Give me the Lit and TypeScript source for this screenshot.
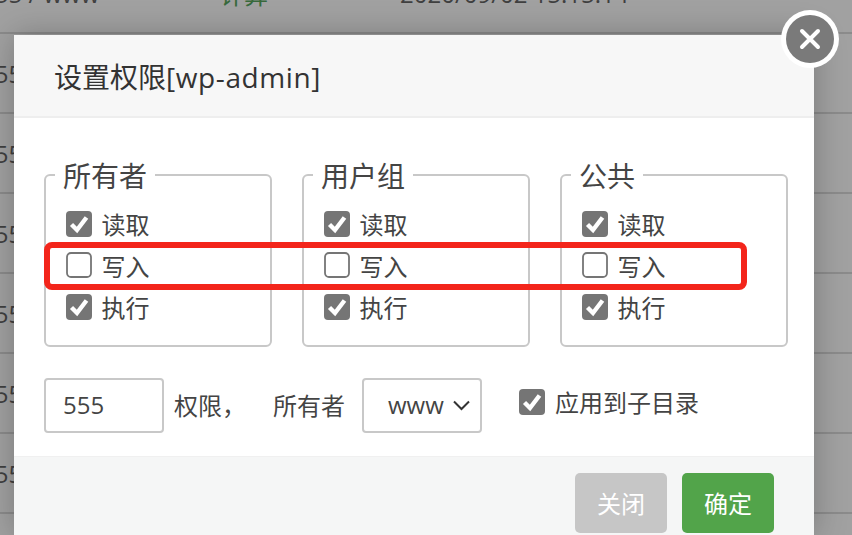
import { LitElement, html, css, svg } from "lit";
import { customElement } from "lit/decorators.js";

const box = (checked: boolean) => html`<svg class="cb" viewBox="0 0 26 26" width="26" height="26">
  ${checked
    ? svg`<rect width="26" height="26" rx="4" fill="#757575"/><path d="M5.5 13.5 L11 19 L20.5 6.5" fill="none" stroke="#fff" stroke-width="4.4"/>`
    : svg`<rect x="1" y="1" width="24" height="24" rx="4" fill="#fff" stroke="#757575" stroke-width="1.8"/>`}
</svg>`;

@customElement("app-root")
export class AppRoot extends LitElement {
  static styles = css`
    :host { display: block; width: 852px; height: 535px; font-family: "Open Sans", "Noto Sans CJK SC", sans-serif; }
    * { box-sizing: border-box; }
    .page { position: relative; width: 852px; height: 535px; overflow: hidden; background: #fff; }
    .table { margin-top: -46px; }
    .tr { display: flex; height: 80px; border-bottom: 2px solid #dcdcdc; align-items: center; font-size: 24px; color: #666; white-space: nowrap; }
    .c1 { width: 219px; margin-left: -19px; flex: none; }
    .c2 { width: 180px; flex: none; color: #5aa860; margin-left: 20px; }
    .c3 { flex: none; }
    .shade { position: absolute; inset: 0; background: rgba(0, 0, 0, 0.37); }
    .dialog { position: absolute; left: 14px; top: 35px; width: 800px; background: #fff; box-shadow: 0 0 30px rgba(0,0,0,.25); color: #444; }
    .head { height: 83px; background: #f7f7f7; border-bottom: 2px solid #eeeeee; padding-left: 40px; display: flex; align-items: center; font-size: 28px; color: #333; }
    .latin { letter-spacing: 0.6px; }
    .body { padding: 36px 26px 23px 30px; }
    .groups { display: flex; gap: 30px; }
    fieldset { width: 228px; height: 193px; margin: 0; padding: 7px 0 0 20px; border: 2px solid #c8c8c8; border-radius: 6px; }
    legend { padding: 2px 8px 0; margin-left: -11px; font-size: 28px; line-height: 40px; color: #444; }
    .chk { display: flex; align-items: center; gap: 9.5px; height: 41.5px; font-size: 24px; color: #444; }
    .cb { flex: none; display: block; }
    .bottom { display: flex; align-items: center; margin-top: 31px; height: 55px; font-size: 24px; }
    input { width: 120px; height: 55px; border: 2px solid #c8c8c8; border-radius: 4px; padding: 0 0 2px 17px; font: inherit; color: #444; outline: none; }
    .lbl1 { margin-left: 10px; width: 99px; padding-bottom: 2px; }
    .lbl2 { margin-right: 17px; padding-bottom: 2px; }
    .select { width: 120px; height: 55px; border: 2px solid #c8c8c8; border-radius: 4px; display: flex; align-items: center; padding: 0 0 2px 24px; gap: 9px; }
    .select svg { flex: none; margin-top: 1px; }
    .apply { margin-left: 37px; margin-bottom: 8px; height: 41px; gap: 10px; }
    .foot { height: 79px; background: #f5f6f6; border-top: 1px solid #f0f0f0; display: flex; justify-content: flex-end; align-items: flex-start; gap: 15px; padding: 16px 40px 0 0; }
    button { width: 92px; height: 60px; border: none; border-radius: 5px; font: inherit; font-size: 24px; color: #fff; padding: 0 0 2px; }
    .off { background: #c6c6c6; }
    .ok { background: #52a44a; }
    .close { position: absolute; left: 781px; top: 10px; width: 58px; height: 58px; display: block; }
    .mark { position: absolute; left: 44px; top: 242px; width: 703px; height: 48px; border: 6px solid #f3251b; border-radius: 8px; pointer-events: none; }
  `;

  group(name: string) {
    return html`<fieldset>
      <legend>${name}</legend>
      <label class="chk">${box(true)}读取</label>
      <label class="chk">${box(false)}写入</label>
      <label class="chk">${box(true)}执行</label>
    </fieldset>`;
  }

  render() {
    const rows = [0, 1, 2, 3, 4, 5, 6, 7];
    return html`<div class="page">
      <div class="table">
        ${rows.map(
          () => html`<div class="tr">
            <div class="c1">555 / www</div>
            <div class="c2">计算</div>
            <div class="c3">2020/09/02 15:15:14</div>
          </div>`
        )}
      </div>
      <div class="shade"></div>
      <div class="dialog">
        <div class="head"><span>设置权限<span class="latin">[wp-admin]</span></span></div>
        <div class="body">
          <div class="groups">${this.group("所有者")}${this.group("用户组")}${this.group("公共")}</div>
          <div class="bottom">
            <input value="555" />
            <span class="lbl1">权限，</span>
            <span class="lbl2">所有者</span>
            <div class="select">www
              <svg width="17" height="11" viewBox="0 0 17 11"><path d="M1 1.5 L8.5 9 L16 1.5" fill="none" stroke="#333" stroke-width="2"/></svg>
            </div>
            <label class="chk apply">${box(true)}应用到子目录</label>
          </div>
        </div>
        <div class="foot">
          <button class="off">关闭</button>
          <button class="ok">确定</button>
        </div>
      </div>
      <svg class="close" viewBox="0 0 58 58">
        <circle cx="29" cy="29" r="29" fill="#fff"/>
        <circle cx="29" cy="29" r="24" fill="#7a7a7a"/>
        <path d="M21 21 L37 37 M37 21 L21 37" stroke="#fff" stroke-width="4" stroke-linecap="round"/>
      </svg>
      <div class="mark"></div>
    </div>`;
  }
}
